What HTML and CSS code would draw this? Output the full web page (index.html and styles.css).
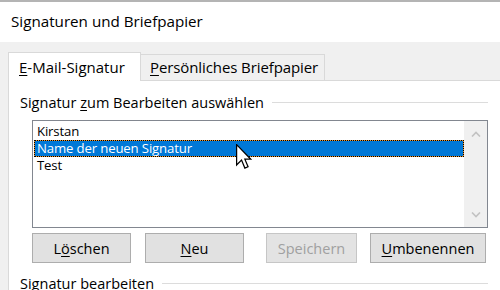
FILE: index.html
```html
<!DOCTYPE html>
<html>
  <head>
    <meta charset="UTF-8" />
    <title>Signaturen und Briefpapier</title>
    <link rel="stylesheet" href="styles.css">
  </head>
  <body>
    <div class="titlebar">Signaturen und Briefpapier</div>

    <div class="dialog">
      <!-- Tabs -->
      <div class="tabs">
        <div class="tab active"><u>E</u>-Mail-Signatur</div>
        <div class="tab"><u>P</u>ersönliches Briefpapier</div>
      </div>

      <div class="panel">
        <div class="group-label"><span>Signatur <u>z</u>um Bearbeiten auswählen</span></div>

        <div class="listbox">
          <ul class="items">
            <li>Kirstan</li>
            <li class="selected">Name der neuen Signatur</li>
            <li>Test</li>
          </ul>
          <div class="scrollbar">
            <svg width="10" height="6" viewBox="0 0 10 6"><path d="M1 5.5 L5 1.5 L9 5.5" fill="none" stroke="#c2c2c2" stroke-width="1.6"/></svg>
            <svg width="10" height="6" viewBox="0 0 10 6"><path d="M1 0.5 L5 4.5 L9 0.5" fill="none" stroke="#c2c2c2" stroke-width="1.6"/></svg>
          </div>
        </div>

        <div class="buttons">
          <button class="btn">L<u>ö</u>schen</button>
          <button class="btn"><u>N</u>eu</button>
          <button class="btn" disabled>Speichern</button>
          <button class="btn"><u>U</u>mbenennen</button>
        </div>

        <div class="group-label lower"><span>Signatur bearbeiten</span></div>
      </div>
    </div>

    <!-- mouse pointer over the selected entry -->
    <svg class="cursor" width="16" height="26" viewBox="0 0 13 21">
      <path d="M0.5 0.5 L0.5 17 L4.5 13 L7.2 19.5 L9.8 18.4 L7.2 12.3 L12 12.3 Z" fill="#fff" stroke="#000" stroke-width="1" stroke-linejoin="miter"/>
    </svg>
  </body>
</html>
```

FILE: styles.css
```css
/* Base */
html, body {
  margin: 0;
  padding: 0;
  width: 500px;
  height: 290px;
  overflow: hidden;
}

body {
  background: #f0f0f0;
  font-family: 'Open Sans', 'Noto Sans', sans-serif;
  font-size: 14.5px;
  color: #000;
  position: relative;
}

u {
  text-decoration: underline;
  text-underline-offset: 2px;
}

/* Window title */
.titlebar {
  box-sizing: border-box;
  height: 42px;
  border-top: 2px solid #b4b4b4;
  background: #fff;
  padding-left: 11px;
  font-size: 15.2px;
  line-height: 38px;
}

/* Dialog body */
.dialog {
  padding: 10px 0 0 8px;
}

.tabs {
  display: flex;
  align-items: flex-end;
  height: 28px;
  font-size: 15px;
}

.tab {
  box-sizing: border-box;
  height: 26px;
  padding: 0 10px;
  border: 1px solid #d9d9d9;
  border-bottom: none;
  background: #f0f0f0;
  line-height: 24px;
  white-space: nowrap;
}

.tab.active {
  width: 133px;
  height: 29px;
  margin-bottom: -1px;
  background: #fff;
  line-height: 28px;
  padding-left: 10px;
  position: relative;
  z-index: 1;
}

.tab + .tab {
  width: 184px;
  border-left: none;
  padding-left: 9px;
  letter-spacing: -0.1px;
}

.panel {
  background: #fff;
  border-top: 1px solid #d9d9d9;
  border-left: 1px solid #d9d9d9;
  padding: 11px 12px 0 11px;
  height: 198px;
}

/* Group heading with rule */
.group-label {
  display: flex;
  align-items: center;
  gap: 8px;
  height: 20px;
  white-space: nowrap;
}

.group-label::after {
  content: "";
  flex: 1;
  border-top: 1px solid #dcdcdc;
  margin-top: 1px;
}

.group-label.lower {
  margin-top: 10px;
}

/* List box */
.listbox {
  display: flex;
  box-sizing: border-box;
  margin: 8px 0 0 12px;
  height: 108px;
  border: 1px solid #828790;
  background: #fff;
}

.items {
  flex: 1;
  list-style: none;
  margin: 0;
  padding: 2px 0 0 1px;
  font-size: 13.2px;
  letter-spacing: -0.15px;
}

.items li {
  box-sizing: border-box;
  height: 17px;
  line-height: 15px;
  padding-left: 2px;
  border: 1px solid transparent;
}

.items li.selected {
  color: #fff;
  border: 1px dotted #000;
  background: linear-gradient(#0078d7, #0078d7) padding-box, linear-gradient(#f0962c, #f0962c) border-box;
}

.scrollbar {
  width: 23px;
  background: #f0f0f0;
  display: flex;
  flex-direction: column;
  justify-content: space-between;
  align-items: center;
  padding: 10px 0 9px;
  box-sizing: border-box;
}

.scrollbar svg {
  display: block;
}

/* Buttons */
.buttons {
  display: flex;
  gap: 14px;
  margin: 5px 0 0 12px;
}

.btn {
  box-sizing: border-box;
  width: 99px;
  height: 30px;
  padding: 0;
  font: inherit;
  color: #000;
  background: #e1e1e1;
  border: 1px solid #adadad;
}

.btn:nth-child(3) {
  margin-left: 8px;
  width: 91px;
}

.btn:disabled {
  color: #a0a0a0;
  border-color: #c6c6c6;
  background: #e3e3e3;
}

.btn:last-child {
  width: 116px;
  margin-left: -1px;
}

/* Pointer */
.cursor {
  position: absolute;
  left: 236px;
  top: 144px;
}
```
